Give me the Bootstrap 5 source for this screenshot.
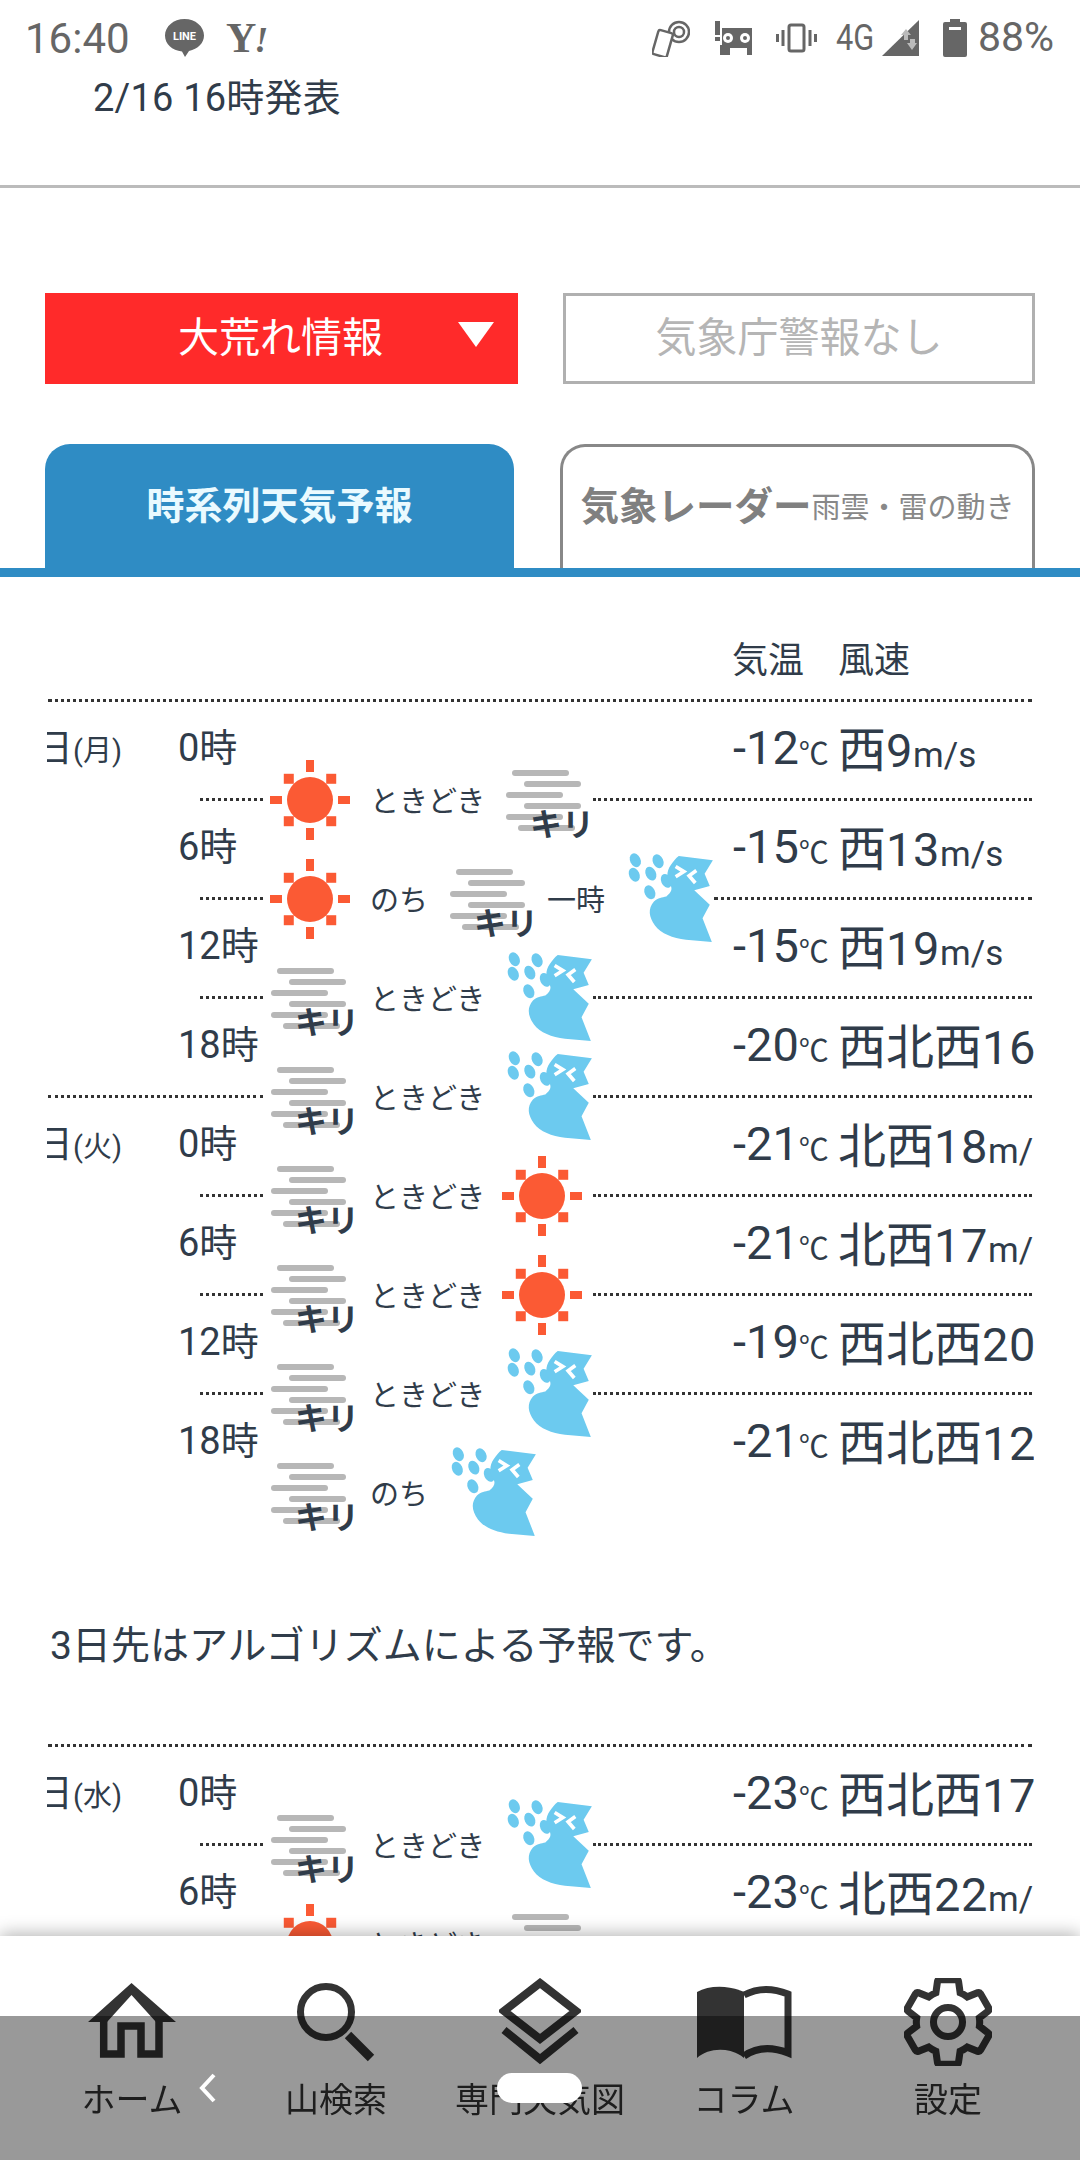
<!DOCTYPE html>
<html lang="ja">
<head>
<meta charset="UTF-8">
<meta name="viewport" content="width=device-width, initial-scale=1.0">
<title>天気予報</title>
<link href="https://cdn.jsdelivr.net/npm/bootstrap@5.3.0/dist/css/bootstrap.min.css" rel="stylesheet">
<style>
html, body { height: 2160px; overflow: hidden; }
body { font-family: Roboto, "Noto Sans CJK JP", sans-serif; color: #303c4a; background: #fff; }
.cjk { font-family: "Noto Sans CJK JP", sans-serif; }

.stat-bar { height: 74px; padding: 2px 26px 0 25px; color: #666; }
.stat-time { font-size: 42px; width: 139px; }
.stat-y { font-family: "Liberation Serif", serif; font-weight: 700; font-size: 42px; margin-left: 21px; letter-spacing: -2px; }
.stat-y i { font-size: 36px; }
.stat-4g { font-size: 37px; width: 46px; margin: 0 0 0 19px; transform: scaleX(.83); transform-origin: left center; }
.stat-pct { font-size: 41px; margin-left: 11px; }
.pub-date { font-size: 38px; line-height: 44px; padding: 2px 0 0 93px; margin-bottom: 65px; letter-spacing: .2px; }
.top-rule { border-top: 3px solid #bbb; margin-bottom: 105px; }

.alert-row { padding: 0 45px; gap: 45px; margin-bottom: 60px; }
.alert-red, .alert-none { height: 91px; width: 473px; font-size: 41px; padding-bottom: 7px; }
.alert-red { background: #ff2a2a; color: #fff; position: relative; }
.alert-tri { position: absolute; left: 413px; top: 29px; width: 36px; height: 25px; }
.alert-none { border: 3px solid #b0b0b0; color: #b5b5b5; width: 472px; }

.tab-row { padding: 0 45px; gap: 46px; border-bottom: 9px solid #2f8cc4; margin-bottom: 62px; }
.tab-on, .tab-off { height: 124px; border-radius: 25px 25px 0 0; font-weight: 700; padding-bottom: 8px; }
.tab-on { width: 469px; background: #2f8cc4; color: #eafaff; font-size: 38px; }
.tab-off { width: 475px; border: 3px solid #888; border-bottom: 0; color: #808080; font-size: 38.500px; }
.tab-sub { font-size: 29px; font-weight: 400; color: #888; padding-top: 4px; }

.col-head { font-size: 36px; line-height: 44px; padding-left: 732px; gap: 34px; margin-bottom: 16px; }
.dots { border-top: 3px dotted #333; }
.dots-full { margin: 0 48px; }

.fc-stack { display: grid; }
.fc-stack > div { grid-area: 1 / 1; }
.txt-wrap { margin-top: -3px; }
.txt-row { height: 99px; padding-left: 47px; }
.day-cell { width: 75px; margin-right: 56px; font-size: 38px; white-space: nowrap; overflow: hidden; justify-content: flex-end; }
.day-cell span { font-size: 29px; }
.hour-cell { width: 555px; font-size: 38px; }
.temp-cell { width: 105px; font-size: 47px; white-space: nowrap; }
.temp-cell span { font-size: 30px; }
.wind-cell { width: 196px; font-size: 47px; letter-spacing: .6px; white-space: nowrap; overflow: hidden; }
.wind-cell b { font-weight: 400; font-size: 48px; letter-spacing: 0; }
.wind-cell span { font-size: 35px; letter-spacing: 0; }

.band-wrap { padding-top: 48px; }
.band { height: 99px; padding-right: 48px; font-size: 29px; }
.dash-l { width: 63px; margin-left: 200px; margin-right: 8px; }
.dash-l-full { width: 215px; margin-left: 48px; margin-right: 8px; }
.dash-r { margin-left: 3px; }
.ico-slot { flex: none; width: 84px; }
.fc-word + .ico-slot .sun-ico { margin-left: -3px; }
.fc-ico { display: block; overflow: visible; }
.fc-word { flex: none; line-height: 1; padding-top: 6px; }
.kiri-word { font-family: "Noto Sans CJK JP", sans-serif; font-weight: 700; font-size: 32px; fill: #303c4a; }

.algo-note { font-size: 39px; line-height: 50px; padding-left: 50px; margin: 79px 0 73px; white-space: nowrap; }

.app-nav { position: fixed; left: 0; right: 0; bottom: 0; height: 224px; background: #fff; box-shadow: 0 -3px 16px rgba(0,0,0,.28); padding: 40px 30px 0; }
.app-nav-item { width: 204px; }
.app-nav-ico { height: 92px; }
.app-nav-label { font-size: 34px; line-height: 40px; margin-top: 12px; color: #333; white-space: nowrap; }

.sys-bar { position: fixed; left: 0; right: 0; bottom: 0; height: 144px; background: rgba(0,0,0,.4); padding-top: 57px; }
.sys-back { margin-left: 198px; width: 20px; height: 30px; }
.sys-pill { margin-left: 279px; width: 85px; height: 30px; border-radius: 15px; background: #fff; }
</style>
</head>
<body>

<div class="stat-bar d-flex align-items-center">
    <div class="stat-time">16:40</div>
    <svg width="41" height="40" viewBox="0 0 41 40">
        <path d="M20.5 1C9.5 1 1 8.500 1 17.500 1 26 8 32.500 18 33.500L21 39 25 33C34 31 40 25 40 17.500 40 8.500 31.500 1 20.500 1Z" fill="#666"/>
        <text x="20.500" y="22" text-anchor="middle" font-family="Roboto" font-weight="700" font-size="11" fill="#fff">LINE</text>
    </svg>
    <div class="stat-y">Y<i>!</i></div>
    <div class="ms-auto d-flex align-items-center">
        <svg width="38" height="38" viewBox="0 0 38 38" fill="none" stroke="#666">
            <circle cx="27" cy="13" r="10" stroke-width="2.500"/>
            <circle cx="27" cy="13" r="5" stroke-width="2.500"/>
            <rect x="3" y="12" width="15" height="25" rx="2" transform="rotate(16 10 25)" stroke-width="2.500" fill="#fff"/>
        </svg>
        <svg class="ms-4" width="38" height="34" viewBox="0 0 38 34" fill="#666">
            <path d="M1 0h5v14H1zM1 16h5v4H1zM8 7h30v27h-5v-7H16v7H6V24h2z"/>
            <circle cx="14" cy="17" r="5" fill="#fff"/><circle cx="31" cy="17" r="5" fill="#fff"/>
            <circle cx="14" cy="17" r="2"/><circle cx="31" cy="17" r="2"/>
        </svg>
        <svg class="ms-4" width="41" height="30" viewBox="0 0 41 30" fill="none" stroke="#666" stroke-width="3">
            <rect x="13" y="2" width="15" height="26" rx="2"/>
            <path d="M7 7v16M1.500 11v8M34 7v16M39.500 11v8"/>
        </svg>
        <div class="stat-4g">4G</div>
        <svg width="37" height="36" viewBox="0 0 37 36">
            <path d="M0 36L37 0V36Z" fill="#666"/>
            <path d="M24 9L29 15H26V20H22V15H19ZM30 30L25 23H28V19H33V23H35Z" fill="#bbb"/>
        </svg>
        <svg class="ms-4" width="24" height="38" viewBox="0 0 24 38">
            <path d="M7 0h10v3h5a2 2 0 0 1 2 2v31a2 2 0 0 1-2 2H2a2 2 0 0 1-2-2V5a2 2 0 0 1 2-2h5z" fill="#666"/>
            <rect x="6" y="8" width="12" height="3" fill="#fff"/>
        </svg>
        <div class="stat-pct">88%</div>
    </div>
</div>
<div class="pub-date">2/16 16時発表</div>
<div class="top-rule"></div>

<div class="alert-row d-flex">
    <div class="alert-red d-flex align-items-center cjk"><span style="margin-left:133px">大荒れ情報</span>
        <svg class="alert-tri" viewBox="0 0 36 25"><path d="M0 0H36L18 25Z" fill="#fff"/></svg>
    </div>
    <div class="alert-none d-flex align-items-center justify-content-center cjk">気象庁警報なし</div>
</div>

<div class="tab-row d-flex">
    <div class="tab-on d-flex align-items-center justify-content-center cjk">時系列天気予報</div>
    <div class="tab-off d-flex align-items-center justify-content-center cjk text-nowrap">気象レーダー<span class="tab-sub">雨雲・雷の動き</span></div>
</div>

<div class="col-head d-flex"><div>気温</div><div>風速</div></div>
<div class="dots dots-full"></div>
<div class="fc-first"></div>

<div class="algo-note">3日先はアルゴリズムによる予報です。</div>
<div class="dots dots-full"></div>
<div class="fc-second"></div>

<div class="app-nav d-flex"></div>

<div class="sys-bar d-flex align-items-start">
    <svg class="sys-back" viewBox="0 0 20 30" fill="none" stroke="#fff" stroke-width="4"><path d="M16 2L4 15L16 28"/></svg>
    <div class="sys-pill"></div>
</div>

<script src="https://cdn.jsdelivr.net/npm/bootstrap@5.3.0/dist/js/bootstrap.bundle.min.js"></script>
<script>
    function sunIcon(){
        let rays = ''
        for(let a = 0; a < 360; a += 45){
            rays += a % 90 === 0
                ? `<rect x="35" y="0" width="8" height="12" transform="rotate(${a} 39 40)"/>`
                : `<rect x="34" y="5" width="10" height="10" transform="rotate(${a} 39 40) rotate(45 39 10)"/>`
        }
        return `<svg class="fc-ico sun-ico" width="78" height="80" viewBox="0 0 78 80" fill="#fb5a34"><circle cx="39" cy="40" r="23"/>${rays}</svg>`
    }

    // bars start 30px above the line, the word hangs lower, so the box is taller than it looks
    function kiriIcon(){
        let bars = [[6,0],[18,11],[0,22],[18,33],[0,44],[12,55]]
        let rects = bars.map((b) => `<rect x="${b[0]}" y="${b[1]}" width="57" height="6" rx="3" fill="#b7b7b7"/>`).join('')
        return `<svg class="fc-ico" width="84" height="84" viewBox="0 -12 84 84">${rects}<text x="24" y="66" class="kiri-word">キリ</text></svg>`
    }

    function snowIcon(){
        let dots = [[8,7],[30,8],[7,21],[23,20],[38,27],[22,38]]
        let drops = dots.map((d) => `<ellipse cx="${d[0]}" cy="${d[1]}" rx="5" ry="7" transform="rotate(-25 ${d[0]} ${d[1]})"/>`).join('')
        return `<svg class="fc-ico" width="88" height="91" viewBox="0 0 85 88" fill="#6ccaef">${drops}
            <path d="M50 3L83 7L75 20L80 32L65 36L80 50L73 63L82 86L57 84C44 82 33 78 27 70C21 62 20 54 26 47C30 43 34 43 38 42C43 38 44 35 42 31C38 25 38 18 42 12C45 8 47 5 50 3Z"/>
            <path d="M47 13L55 18L47 23M67 17L60 22L66 29" fill="none" stroke="#fff" stroke-width="3.500"/></svg>`
    }

    function bandHtml(parts){
        let out = ''
        parts.forEach((p) => {
            if(p === 'sun') out += `<div class="ico-slot">${sunIcon()}</div>`
            else if(p === 'kiri') out += `<div class="ico-slot">${kiriIcon()}</div>`
            else if(p === 'snow') out += `<div class="ico-slot">${snowIcon()}</div>`
            else out += `<div class="fc-word" style="margin:${p[1]}">${p[0]}</div>`
        })
        return out
    }

    function renderForecast(target, rows){
        let txt = '', bands = ''
        rows.forEach((r) => {
            let wind = `<b class="cjk">${r.dir}</b>${r.speed}<span>m/s</span>`
            txt += `<div class="txt-row d-flex align-items-center">
                <div class="day-cell d-flex align-items-baseline">${r.day ? r.day[0] + '<span>' + r.day[1] + '</span>' : ''}</div>
                <div class="hour-cell">${r.hour}</div>
                <div class="temp-cell">${r.temp}<span class="cjk">℃</span></div>
                <div class="wind-cell">${wind}</div>
            </div>`
            let left = r.last ? '<div class="dash-l"></div>' : `<div class="dots ${r.full ? 'dash-l-full' : 'dash-l'}"></div>`
            let right = r.last ? '' : '<div class="dots dash-r flex-grow-1"></div>'
            bands += `<div class="band d-flex align-items-center">${left}${bandHtml(r.band)}${right}</div>`
        })
        document.querySelector(target).innerHTML = `<div class="fc-stack">
            <div class="txt-wrap">${txt}</div><div class="band-wrap">${bands}</div></div>`
    }

    const toki = ['ときどき', '0 21px 0 15px']
    const nochi = ['のち', '0 22px 0 15px']

    renderForecast('.fc-first', [
        {day:['16日','(月)'], hour:'0時', temp:'-12', dir:'西', speed:'9', band:['sun', toki, 'kiri']},
        {hour:'6時', temp:'-15', dir:'西', speed:'13', band:['sun', nochi, 'kiri', ['一時','0 22px 0 13px'], 'snow']},
        {hour:'12時', temp:'-15', dir:'西', speed:'19', band:['kiri', toki, 'snow']},
        {hour:'18時', temp:'-20', dir:'西北西', speed:'16', full:true, band:['kiri', toki, 'snow']},
        {day:['17日','(火)'], hour:'0時', temp:'-21', dir:'北西', speed:'18', band:['kiri', toki, 'sun']},
        {hour:'6時', temp:'-21', dir:'北西', speed:'17', band:['kiri', toki, 'sun']},
        {hour:'12時', temp:'-19', dir:'西北西', speed:'20', band:['kiri', toki, 'snow']},
        {hour:'18時', temp:'-21', dir:'西北西', speed:'12', last:true, band:['kiri', nochi, 'snow']}
    ])

    renderForecast('.fc-second', [
        {day:['18日','(水)'], hour:'0時', temp:'-23', dir:'西北西', speed:'17', band:['kiri', toki, 'snow']},
        {hour:'6時', temp:'-23', dir:'北西', speed:'22', band:['sun', toki, 'kiri']}
    ])

    const navItems = [
        {label:'ホーム', icon:`<svg width="88" height="78" viewBox="0 0 88 78" fill="none" stroke="#333" stroke-width="7.500"><path d="M43.500 0L88 39H68L43.500 12L19 39H0Z" fill="#333" stroke="none"/><path d="M15.700 37V71H33V43H53V71H71V37"/></svg>`},
        {label:'山検索', icon:`<svg width="80" height="80" viewBox="0 0 80 80" fill="none" stroke="#333"><circle cx="30" cy="30" r="25.500" stroke-width="7"/><path d="M52 53L75 76" stroke-width="9"/></svg>`},
        {label:'専門天気図', icon:`<svg width="82" height="88" viewBox="0 0 82 88" fill="none" stroke="#333" stroke-width="8"><path d="M41 5L77 33L41 61L5 33Z"/><path d="M5 52L41 81L77 52"/></svg>`},
        {label:'コラム', icon:`<svg width="95" height="74" viewBox="0 0 95 74"><path d="M0 7C12 0 32 0 47 7V73C34 62 12 62 0 73Z" fill="#333"/><path d="M47 10C60 3 76 3 91 9V68C76 62 60 62 47 71" fill="none" stroke="#333" stroke-width="7"/></svg>`},
        {label:'設定', icon:`<svg width="88" height="88" viewBox="2 2 20 20" fill="none" stroke="#333" stroke-width="1.600"><path d="M19.14,12.94c0.04-0.3,0.06-0.61,0.06-0.94c0-0.32-0.02-0.64-0.07-0.94l2.03-1.58c0.18-0.14,0.23-0.41,0.12-0.61l-1.92-3.32c-0.12-0.22-0.37-0.29-0.59-0.22l-2.39,0.96c-0.5-0.38-1.03-0.7-1.62-0.94L14.4,2.81c-0.04-0.24-0.24-0.41-0.48-0.41h-3.84c-0.24,0-0.43,0.17-0.47,0.41L9.25,5.35C8.66,5.59,8.12,5.92,7.63,6.29L5.24,5.33c-0.22-0.08-0.47,0-0.59,0.22L2.74,8.87C2.62,9.08,2.66,9.34,2.86,9.48l2.03,1.58C4.84,11.36,4.8,11.69,4.8,12s0.02,0.64,0.07,0.94l-2.03,1.58c-0.18,0.14-0.23,0.41-0.12,0.61l1.92,3.32c0.12,0.22,0.37,0.29,0.59,0.22l2.39-0.96c0.5,0.38,1.03,0.7,1.62,0.94l0.36,2.54c0.05,0.24,0.24,0.41,0.48,0.41h3.84c0.24,0,0.44-0.17,0.47-0.41l0.36-2.54c0.59-0.24,1.13-0.56,1.62-0.94l2.39,0.96c0.22,0.08,0.47,0,0.59-0.22l1.92-3.32c0.12-0.22,0.07-0.47-0.12-0.61L19.14,12.94z"/><circle cx="12" cy="12" r="3.300"/></svg>`}
    ]
    navItems.forEach((n) => {
        document.querySelector('.app-nav').innerHTML += `<div class="app-nav-item d-flex flex-column align-items-center">
            <div class="app-nav-ico d-flex align-items-center">${n.icon}</div>
            <div class="app-nav-label">${n.label}</div></div>`
    })
</script>
</body>
</html>
